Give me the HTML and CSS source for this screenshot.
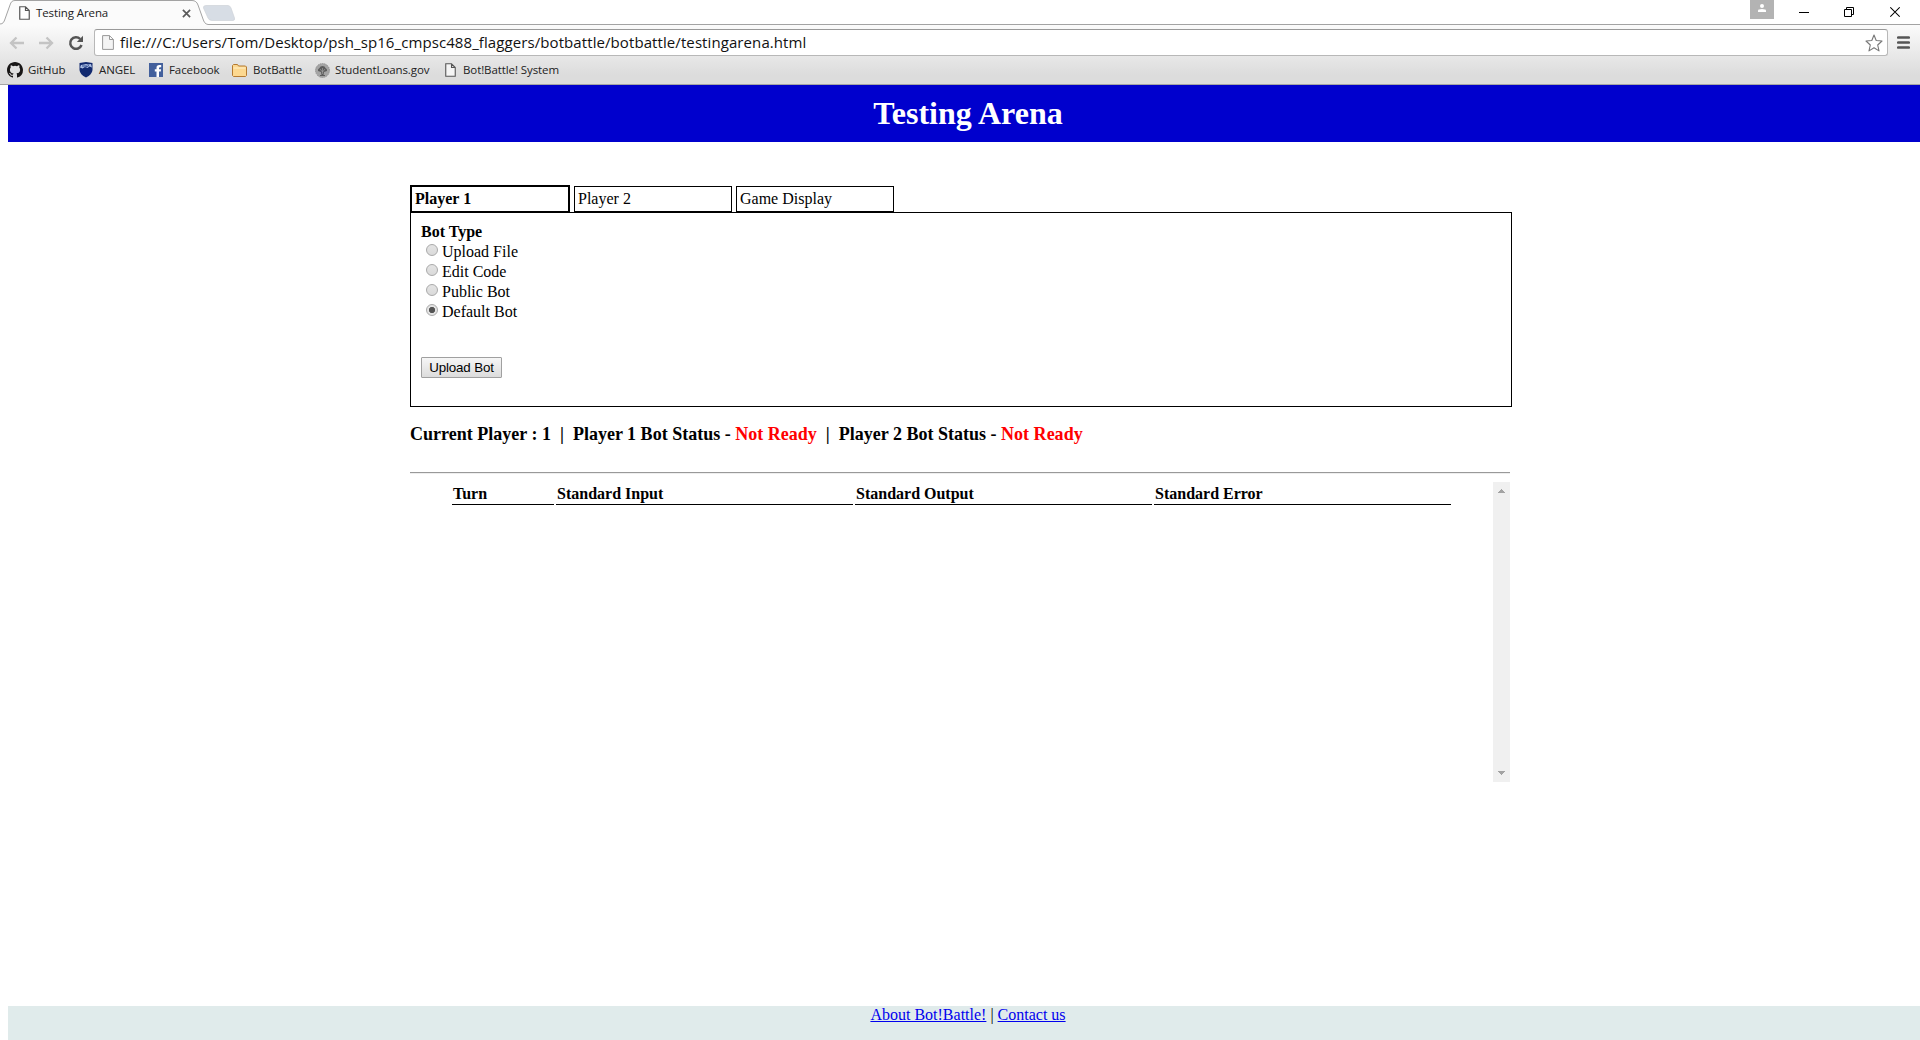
FILE: index.html
```html
<!DOCTYPE html>
<html lang="en">
<head>
<meta charset="utf-8">
<title>Testing Arena</title>
<link rel="stylesheet" href="styles.css">
</head>
<body>
<header class="chrome">
  <div class="tabstrip">
    <svg class="tabshape" width="240" height="25" viewBox="0 0 240 25">
      <path d="M0 25V24C3 24 4 22 5 19L10 5C11 2 12 .5 15 .5H192C195 .5 197 2 198 5L203 19C204 22 205 24 208 24V25Z" fill="#fbfbfb"/>
      <path d="M0 24C3 24 4 22 5 19L10 5C11 2 12 .5 15 .5H192C195 .5 197 2 198 5L203 19C204 22 205 24 208 24.5H240" fill="none" stroke="#a3a3a3"/>
      <path d="M206 5.5H228Q230 5.5 231 8L234.500 18Q235 20.500 233 20.500H212Q209 20.500 208 18L203.500 8Q203 5.500 206 5.500Z" fill="#d7dde5" stroke="#cfd3d9" stroke-width=".7"/>
    </svg>
    <div class="tab">
      <svg width="11" height="14" viewBox="0 0 11 14"><path d="M.75.75H6.500L10.250 4.500V13.250H.75ZM6.500.75V4.500H10.250" fill="#fff" stroke="#555" stroke-width="1.200"/></svg>
      <span class="tabtitle">Testing Arena</span>
      <svg width="9" height="9" viewBox="0 0 9 9"><path d="M.9.900 8.100 8.100M8.100.900.900 8.100" stroke="#5a5a5a" stroke-width="1.700"/></svg>
    </div>
    <div class="wincontrols">
      <svg width="24" height="19" viewBox="0 0 24 19"><path d="M0 0H24V19H0Z" fill="#b3b3b3"/><circle cx="12" cy="6" r="2" fill="#fff"/><path d="M8 12V10.500Q8 9 12 9T16 10.500V12Z" fill="#fff"/></svg>
      <svg width="10" height="24" viewBox="0 0 10 24"><path d="M0 12.500H10" stroke="#000"/></svg>
      <svg width="10" height="24" viewBox="0 0 10 24"><path d="M.5 9.500H7.500V16.500H.5ZM2.500 9.500V7.500H9.500V14.500H7.500" fill="none" stroke="#000"/></svg>
      <svg width="10" height="24" viewBox="0 0 10 24"><path d="M.3 7.300 9.700 16.700M9.700 7.300.300 16.700" stroke="#000" stroke-width="1.100"/></svg>
    </div>
  </div>
  <div class="toolbar">
    <svg class="nav" width="16" height="14" viewBox="0 0 16 14"><path d="M15 7H2M7.500 1.500 2 7 7.500 12.500" fill="none" stroke="#c4c4c4" stroke-width="2.300"/></svg>
    <svg class="nav" width="16" height="14" viewBox="0 0 16 14"><path d="M1 7H14M8.500 1.500 14 7 8.500 12.500" fill="none" stroke="#c4c4c4" stroke-width="2.300"/></svg>
    <svg class="nav reload" width="16" height="16" viewBox="0 0 16 16"><path d="M12.200 4A5.800 5.800 0 1 0 13.500 10" fill="none" stroke="#555" stroke-width="2.500"/><path d="M15 .8V7H8.800Z" fill="#555"/></svg>
    <div class="omnibox">
      <svg width="12" height="15" viewBox="0 0 12 15"><path d="M.6.600H7.500L11.400 4.500V14.400H.6ZM7.500.600V4.500H11.400" fill="#f4f4f4" stroke="#999"/></svg>
      <span class="url">file:///C:/Users/Tom/Desktop/psh_sp16_cmpsc488_flaggers/botbattle/botbattle/testingarena.html</span>
      <svg width="18" height="18" viewBox="0 0 18 18"><path d="M9 1 11.200 6.500 17 7 12.700 11 14 16.900 9 13.800 4 16.900 5.300 11 1 7 6.800 6.500Z" fill="#fff" stroke="#777" stroke-width="1.100" stroke-linejoin="round"/></svg>
    </div>
    <svg class="menu" width="13" height="13" viewBox="0 0 13 13"><path d="M1.300 1.500H11.700M1.300 6.500H11.700M1.300 11.500H11.700" stroke="#555" stroke-width="2.700" stroke-linecap="round"/></svg>
  </div>
  <nav class="bookmarks">
    <div class="bm github"><svg width="16" height="16" viewBox="0 0 16 16"><path fill="#181616" d="M8 0C3.580 0 0 3.580 0 8c0 3.540 2.290 6.530 5.470 7.590.400.070.550-.170.550-.380 0-.190-.010-.820-.010-1.490-2.010.370-2.530-.490-2.690-.940-.090-.230-.480-.940-.820-1.130-.280-.150-.680-.520-.010-.530.630-.010 1.080.580 1.230.820.720 1.210 1.870.870 2.330.660.070-.520.280-.870.510-1.070-1.780-.200-3.640-.890-3.640-3.950 0-.870.310-1.590.820-2.150-.080-.200-.360-1.020.080-2.120 0 0 .670-.210 2.200.820a7.600 7.600 0 0 1 4 0c1.530-1.040 2.200-.820 2.200-.820.440 1.100.160 1.920.080 2.120.510.560.820 1.270.820 2.150 0 3.070-1.870 3.750-3.650 3.950.290.250.540.730.540 1.480 0 1.070-.010 1.930-.010 2.200 0 .210.150.460.550.380A8 8 0 0 0 16 8c0-4.420-3.580-8-8-8Z"/></svg><span>GitHub</span></div>
    <div class="bm angel"><svg width="14" height="16" viewBox="0 0 14 16"><path d="M.5 1 7 0 13.500 1V8Q13 12.500 7 15.500 1 12.500.5 8Z" fill="#122a70"/><path d="M1 5.500 2 3 5 2.500 7 2 9 2.500 12 2 13 5.500 10.500 4.500 8.500 6 6 5 3.500 6.500 1 5.500Z" fill="#adc0e4"/><path d="M3 4H8M6 5.500 10 3.500" stroke="#304c91"/></svg><span>ANGEL</span></div>
    <div class="bm facebook"><svg width="14" height="14" viewBox="0 0 14 14"><path d="M0 0H14V14H0Z" fill="#43609c"/><path d="M7.500 14V8.500H5.800V6.200H7.500V4.800Q7.500 2 10.200 2H12.200V4.300H11Q10 4.300 10 5.300V6.200H12.100L11.800 8.500H10V14Z" fill="#fff"/></svg><span>Facebook</span></div>
    <div class="bm folder"><svg width="15" height="13" viewBox="0 0 15 13"><path d="M.5 3V1.500L1.500.5H5.500L6.500 2H13.500L14.500 3V11.500L13.500 12.500H1.500L.5 11.500Z" fill="#fcd890" stroke="#b47a31"/><path d="M1.500 4H13.500" stroke="#fff0c8"/></svg><span>BotBattle</span></div>
    <div class="bm loans"><svg width="15" height="15" viewBox="0 0 15 15"><circle cx="7.500" cy="7.500" r="7" fill="#a4a4a4" stroke="#888" stroke-dasharray="1 1"/><path d="M3 8Q2.500 6 4.500 5 5 3 7.500 3T10.500 5Q12.500 6 12 8L9 9 8.500 12H10V13H5V12H6.500L6 9Z" fill="#5b5b5b"/><path d="M5 6 7.500 9 10 6M7.500 5V11" stroke="#aaa" stroke-width=".6" fill="none"/></svg><span>StudentLoans.gov</span></div>
    <div class="bm system"><svg width="11" height="14" viewBox="0 0 11 14"><path d="M.75.75H6.500L10.250 4.500V13.250H.75ZM6.500.75V4.500H10.250" fill="#f5f5f5" stroke="#555" stroke-width="1.100"/></svg><span>Bot!Battle! System</span></div>
  </nav>
</header>
<div class="page">
  <h1 class="banner">Testing Arena</h1>
  <main class="arena">
    <div class="players">
      <div class="player active">Player 1</div>
      <div class="player">Player 2</div>
      <div class="player">Game Display</div>
    </div>
    <section class="panel">
      <b class="legend">Bot Type</b>
      <label class="option"><input type="radio" name="bot">Upload File</label>
      <label class="option"><input type="radio" name="bot">Edit Code</label>
      <label class="option"><input type="radio" name="bot">Public Bot</label>
      <label class="option"><input type="radio" name="bot" checked>Default Bot</label>
      <button class="upload">Upload Bot</button>
    </section>
    <h3 class="status">Current Player : 1 &nbsp;|&nbsp; Player 1 Bot Status - <span class="red">Not Ready</span> &nbsp;|&nbsp; Player 2 Bot Status - <span class="red">Not Ready</span></h3>
    <section class="log">
      <div class="cols">
        <div class="col">Turn</div><div class="col">Standard Input</div><div class="col">Standard Output</div><div class="col">Standard Error</div>
      </div>
      <div class="scroll">
        <svg width="7" height="4" viewBox="0 0 7 4" shape-rendering="crispEdges"><path d="M3 0H4V1H5V2H6V3H7V4H0V3H1V2H2V1H3Z" fill="#a3a3a3"/></svg>
        <svg width="7" height="4" viewBox="0 0 7 4" shape-rendering="crispEdges"><path d="M0 0H7V1H6V2H5V3H4V4H3V3H2V2H1V1H0Z" fill="#a3a3a3"/></svg>
      </div>
    </section>
  </main>
  <footer class="foot"><a href="#">About Bot!Battle!</a> | <a href="#">Contact us</a></footer>
</div>
</body>
</html>
```
FILE: styles.css
```css
* { box-sizing: border-box; }
body { margin: 0; height: 1040px; overflow: hidden; background: #fff; color: #000; font: 16px/20px "Liberation Serif", serif; display: flex; flex-direction: column; }
svg { display: block; flex: none; }
.chrome { height: 85px; flex: none; background: linear-gradient(#fff 0 24px, #fbfbfb 25px, #dcdcdc 75px); border-bottom: 1px solid #a5a5a5; font-family: "Open Sans", sans-serif; display: flex; flex-direction: column; }
.tabstrip { height: 25px; flex: none; position: relative; display: flex; justify-content: space-between; border-bottom: 1px solid #a3a3a3; }
.tabshape { position: absolute; left: 0; top: 0; }
.tab { position: relative; display: flex; align-items: center; width: 210px; height: 26px; padding-left: 19px; font-size: 11.500px; color: #222; }
.tabtitle { width: 144px; margin-left: 6px; margin-right: 2px; letter-spacing: -.1px; }
.wincontrols { display: flex; width: 170px; }
.wincontrols svg:nth-child(2) { margin-left: 25px; }
.wincontrols svg:nth-child(3) { margin-left: 35px; }
.wincontrols svg:nth-child(4) { margin-left: 36px; }
.toolbar { height: 35px; flex: none; display: flex; align-items: center; padding: 0 10px 0 9px; }
.nav { margin-right: 13px; }
.reload { margin: 0 10px 0 1px; }
.omnibox { flex: 1; height: 27px; margin-right: 9px; display: flex; align-items: center; padding: 0 4px 0 7px; background: #fff; border: 1px solid #b8b8b8; border-top-color: #999; border-radius: 3px; }
.url { flex: 1; margin-left: 6px; padding-bottom: 2px; font-size: 15px; letter-spacing: .087px; white-space: nowrap; color: #111; }
.bookmarks { height: 20px; display: flex; align-items: center; font-size: 11.500px; letter-spacing: -.09px; padding-left: 7px; color: #222; }
.bm { display: flex; align-items: center; gap: 5px; white-space: nowrap; }
.github { width: 72px; }
.angel { width: 70px; gap: 6px; }
.facebook { width: 83px; gap: 6px; }
.folder { width: 83px; gap: 6px; }
.loans { width: 130px; }
.system { gap: 7px; }
.page { flex: 1; margin-left: 8px; display: flex; flex-direction: column; align-items: stretch; }
.banner { height: 57px; margin: 0; padding-left: 8px; background: #0000cd; color: #fff; text-align: center; font-size: 32px; line-height: 57px; }
.arena { width: 1102px; margin: 43px 0 0 402px; flex: 1; }
.players { display: flex; gap: 4px; align-items: flex-end; height: 27px; }
.player { width: 158px; height: 26px; border: 1px solid #000; padding: 2px 3px; white-space: nowrap; }
.player.active { width: 160px; height: 27px; border-width: 2px 2px 1px; font-weight: bold; }
.panel { height: 195px; border: 1px solid #000; padding: 9px 10px; display: flex; flex-direction: column; align-items: flex-start; }
.option { display: flex; height: 20px; }
.option input { appearance: none; width: 12px; height: 12px; margin: 2px 4px 0 5px; border: 1px solid #aaa; border-radius: 50%; background: linear-gradient(#e4e4e4, #dadada); }
.option input:checked { background: radial-gradient(circle, #555 0 2.800px, #e4e4e4 3.400px); }
.upload { width: 81px; height: 21px; margin-top: 35px; padding: 0 0 1px; border: 1px solid #a0a0a0; border-radius: 1px; background: linear-gradient(#f6f6f6, #dcdcdc); font: 13.333px "Liberation Sans", sans-serif; letter-spacing: -.15px; color: #000; }
.status { margin: 17px 0 0; font-size: 18.020px; line-height: 20px; height: 48px; white-space: nowrap; }
.red { color: #f00; }
.log { width: 1100px; border-top: 1px solid #999; height: 310px; padding-top: 9px; display: flex; justify-content: space-between; box-shadow: inset 0 1px #eee; }
.cols { display: grid; grid-template-columns: 102px 297px 297px 297px; gap: 2px; padding-left: 42px; height: 23px; }
.col { border-bottom: 1px solid #000; padding: 2px 1px 0; font-weight: bold; }
.scroll { width: 17px; background: #f0f0f0; display: flex; flex-direction: column; justify-content: space-between; align-items: center; padding: 7px 0; }
.foot { height: 34px; padding-left: 8px; background: #e0ebeb; text-align: center; line-height: 18px; }
a { color: #00e; }
```
